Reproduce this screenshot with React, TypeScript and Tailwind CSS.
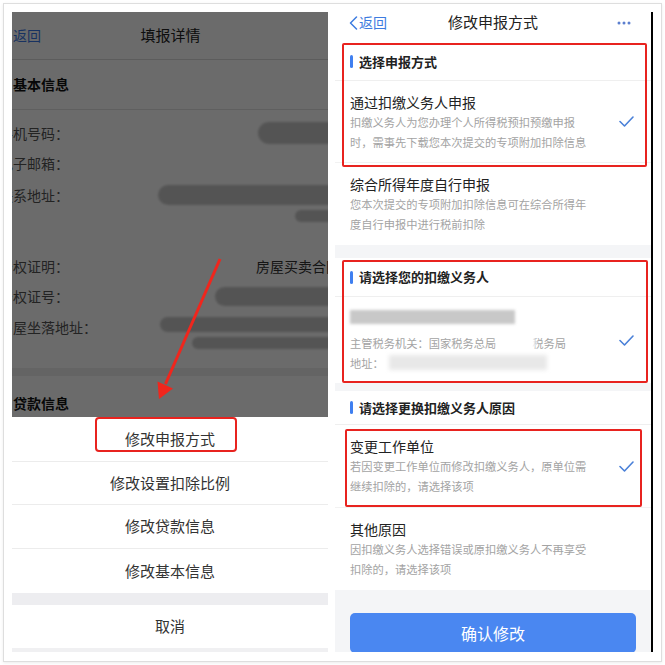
import React from "react";

const Tick = () => (
  <svg width="15" height="11" viewBox="0 0 15 11" fill="none" stroke="#4a80d8" strokeWidth="1.6" strokeLinecap="round" strokeLinejoin="round">
    <polyline points="1,5.5 5.5,10 14,1" />
  </svg>
);

type OptionProps = { title: string; lines: string[]; checked?: boolean; className?: string };

const Option = ({ title, lines, checked, className = "" }: OptionProps) => (
  <div className={`flex items-center pl-[15px] pr-[17px] ${className}`}>
    <div className="flex-1">
      <div className="text-[14px] leading-[20px] text-[#222]">{title}</div>
      {lines.map((l) => (
        <div key={l} className="text-[11.25px] leading-[20px] text-[#a3a3a3]">
          {l}
        </div>
      ))}
    </div>
    {checked && <Tick />}
  </div>
);

const SectionTitle = ({ text, className = "" }: { text: string; className?: string }) => (
  <div className={`flex items-center gap-[6px] border-b border-[#efefef] pl-[15px] ${className}`}>
    <span className="h-[13px] w-[3px] rounded-full bg-[#3f7ff0]" />
    <span className="text-[13px] font-bold text-[#222]">{text}</span>
  </div>
);

const Blur = ({ className }: { className: string }) => (
  <div className={`rounded-full bg-[#c9c9c9] blur-[1px] ${className}`} />
);

const LeftPanel = () => (
  <div className="relative flex h-[640px] w-[316px] shrink-0 flex-col overflow-hidden bg-white">
    {/* dimmed page behind the sheet */}
    <div className="relative h-[405px] shrink-0 overflow-hidden">
      <div className="flex h-[48px] items-center border-b border-[#dcdcdc] pl-[1px]">
        <span className="text-[14px] text-[#3b78e6]">返回</span>
        <span className="flex-1 pr-[28px] text-center text-[15px] text-[#222]">填报详情</span>
      </div>
      <div className="flex h-[50px] items-center border-b border-[#e2e2e2] pl-[1px] text-[14px] font-bold text-[#111]">
        基本信息
      </div>
      <div className="pt-[8px] text-[14px] text-[#555]">
        <div className="flex h-[30px] items-center">
          <span className="-ml-[13px]">手机号码：</span>
          <Blur className="-mr-[10px] ml-auto h-[22px] w-[80px]" />
        </div>
        <div className="flex h-[30px] items-center">
          <span className="-ml-[13px]">电子邮箱：</span>
        </div>
        <div className="flex h-[48px] items-start pt-[7px]">
          <span className="-ml-[13px]">联系地址：</span>
          <div className="-mr-[10px] ml-auto flex w-[180px] flex-col items-end gap-[5px]">
            <Blur className="h-[20px] w-[180px]" />
            <Blur className="h-[12px] w-[43px]" />
          </div>
        </div>
        <div className="h-[25px]" />
        <div className="flex h-[30px] items-center">
          <span className="-ml-[13px]">产权证明：</span>
          <span className="ml-auto -mr-[12px] whitespace-nowrap text-[#333]">房屋买卖合同</span>
        </div>
        <div className="flex h-[30px] items-center">
          <span className="-ml-[13px]">产权证号：</span>
          <Blur className="-mr-[10px] ml-auto h-[19px] w-[123px]" />
        </div>
        <div className="flex h-[46px] items-start pt-[6px]">
          <span className="-ml-[13px]">房屋坐落地址：</span>
          <div className="-mr-[10px] ml-auto flex w-[178px] flex-col items-end gap-[5px]">
            <Blur className="h-[15px] w-[178px]" />
            <Blur className="h-[12px] w-[146px]" />
          </div>
        </div>
      </div>
      <div className="mt-[11px] h-[8px] bg-[#efefef]" />
      <div className="pl-[1px] pt-[17px] text-[14px] font-bold leading-[20px] text-[#111]">贷款信息</div>
      <div className="absolute inset-0 bg-black/[0.58]" />
    </div>

    {/* action sheet */}
    <div className="flex flex-1 flex-col text-[15px] text-[#333]">
      <div className="flex h-[45px] items-center justify-center border-b border-[#ececec]">修改申报方式</div>
      <div className="flex h-[43px] items-center justify-center border-b border-[#ececec]">修改设置扣除比例</div>
      <div className="flex h-[44px] items-center justify-center border-b border-[#ececec]">修改贷款信息</div>
      <div className="flex h-[44px] items-center justify-center">修改基本信息</div>
      <div className="h-[12px] bg-[#ededf0]" />
      <div className="flex h-[43px] items-center justify-center">取消</div>
      <div className="flex-1 bg-[#f0f0f2]" />
    </div>

    {/* annotations */}
    <svg className="absolute left-0 top-0" width="316" height="400" viewBox="0 0 316 400">
      <line x1="208" y1="247" x2="153.5" y2="372" stroke="#f0261d" strokeWidth="3" />
      <polygon points="147,387 145.5,369.5 161,376.5" fill="#f0261d" />
    </svg>
    <div className="absolute left-[83px] top-[405px] h-[35px] w-[142px] rounded-[4px] border-[2.5px] border-[#e8231f]" />
  </div>
);

const RightPanel = () => (
  <div className="relative flex h-[640px] w-[318px] shrink-0 flex-col overflow-hidden border-r-2 border-black bg-[#f4f5f7]">
    <div className="flex h-[31px] items-center bg-white px-[14px] pb-[10px]">
      <div className="flex w-[60px] items-center text-[14px] text-[#3d7be0]">
        <svg width="9" height="14" viewBox="0 0 9 14" fill="none" stroke="#3d7be0" strokeWidth="1.5" strokeLinecap="round" strokeLinejoin="round">
          <polyline points="7.5,1 1.5,7 7.5,13" />
        </svg>
        <span className="ml-[1px]">返回</span>
      </div>
      <div className="flex-1 text-center text-[15px] text-[#222]">修改申报方式</div>
      <div className="flex w-[60px] justify-end pr-[6px]">
        <svg width="14" height="4" viewBox="0 0 14 4" fill="#5c7fcf">
          <circle cx="2" cy="2" r="1.5" />
          <circle cx="7" cy="2" r="1.5" />
          <circle cx="12" cy="2" r="1.5" />
        </svg>
      </div>
    </div>

    <div className="bg-white">
      <SectionTitle text="选择申报方式" className="h-[38px]" />
      <Option
        className="h-[82px] border-b border-[#f2f2f2]"
        title="通过扣缴义务人申报"
        lines={["扣缴义务人为您办理个人所得税预扣预缴申报", "时，需事先下载您本次提交的专项附加扣除信息"]}
        checked
      />
      <Option
        className="h-[82px] pb-[2px] pt-[2px]"
        title="综合所得年度自行申报"
        lines={["您本次提交的专项附加扣除信息可在综合所得年", "度自行申报中进行税前扣除"]}
      />
    </div>

    <div className="mt-[13px] bg-white">
      <SectionTitle text="请选择您的扣缴义务人" className="h-[39px]" />
      <div className="flex h-[86px] items-center pl-[15px] pr-[17px]">
        <div className="flex-1 pt-[2px]">
          <div className="mb-[9px] h-[14px] w-[165px] bg-[#c8c8c8] blur-[1.5px]" />
          <div className="flex items-center text-[11.25px] leading-[20px] text-[#a3a3a3]">
            主管税务机关：国家税务总局
            <span className="-mr-[4px] inline-block h-[16px] w-[40px] rounded-full bg-white blur-[2px]" />
            税务局
          </div>
          <div className="flex items-center text-[11.25px] leading-[20px] text-[#a3a3a3]">
            地址：
            <span className="ml-[5px] inline-block h-[15px] w-[158px] bg-[#e8e8e8] blur-[2px]" />
          </div>
        </div>
        <Tick />
      </div>
    </div>

    <div className="mt-[8px] bg-white">
      <SectionTitle text="请选择更换扣缴义务人原因" className="h-[34px]" />
      <Option
        className="h-[83px] border-b border-[#f2f2f2]"
        title="变更工作单位"
        lines={["若因变更工作单位而修改扣缴义务人，原单位需", "继续扣除的，请选择该项"]}
        checked
      />
      <Option
        className="h-[82px]"
        title="其他原因"
        lines={["因扣缴义务人选择错误或原扣缴义务人不再享受", "扣除的，请选择该项"]}
      />
    </div>

    <div className="flex-1 px-[15px] pt-[23px]">
      <div className="flex h-[40px] items-center justify-center rounded-[5px] bg-[#4a87f1] text-[16px] text-white">确认修改</div>
    </div>

    {/* red annotation boxes */}
    <div className="absolute left-[7px] top-[31px] h-[124px] w-[305px] rounded-[2px] border-2 border-[#e8231f]" />
    <div className="absolute left-[7px] top-[248px] h-[123px] w-[306px] rounded-[2px] border-2 border-[#e8231f]" />
    <div className="absolute left-[10px] top-[417px] h-[78px] w-[297px] rounded-[2px] border-2 border-[#e8231f]" />
  </div>
);

export default function App() {
  return (
    <div className="h-[665px] w-[665px] bg-white p-[3px] font-['Noto_Sans_CJK_SC','Noto_Sans',sans-serif]">
      <div className="flex h-[659px] w-[659px] gap-[7px] border border-[#dedede] p-[8px] shadow-[0_1px_3px_rgba(0,0,0,0.08)]">
        <LeftPanel />
        <RightPanel />
      </div>
    </div>
  );
}
